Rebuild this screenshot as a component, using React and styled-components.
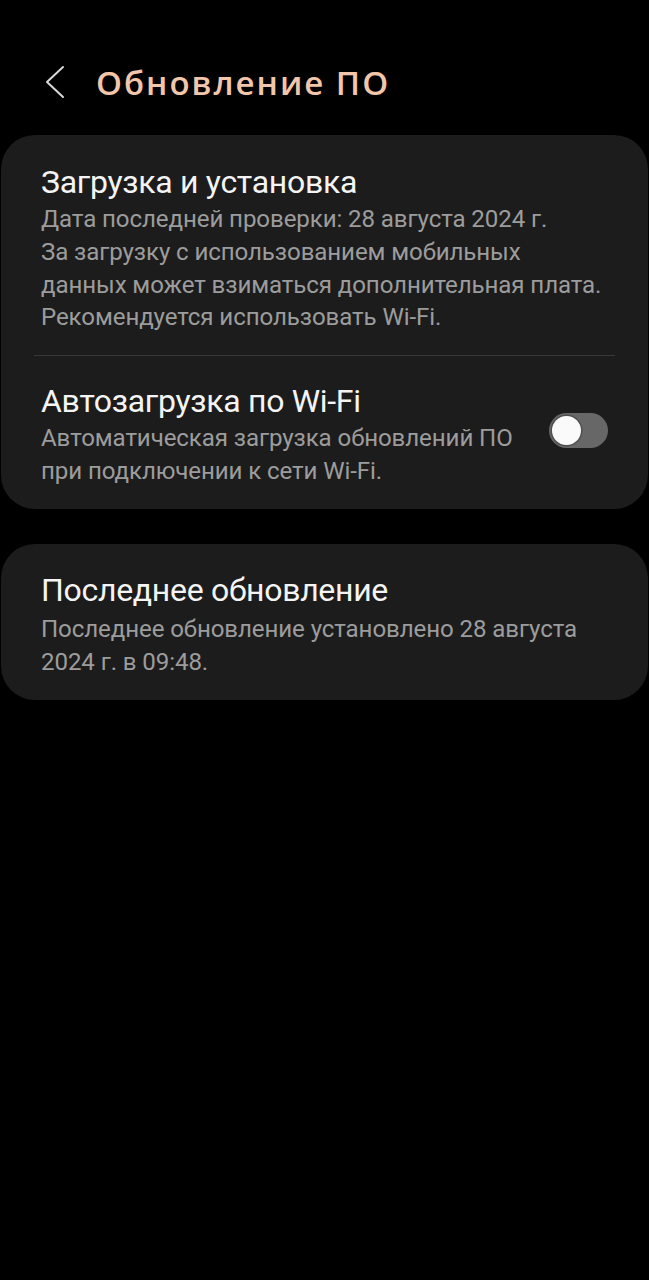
import React, { useState } from 'react';
import styled, { createGlobalStyle } from 'styled-components';

const GlobalStyle = createGlobalStyle`
  html, body {
    margin: 0;
    padding: 0;
    background: #000;
  }
  body {
    font-family: Roboto, "Noto Sans", "Liberation Sans", sans-serif;
    -webkit-font-smoothing: antialiased;
  }
`;

const Page = styled.main`
  min-height: 1280px;
  background: #000;
  padding: 47px 1px 0;
  box-sizing: border-box;
`;

const Header = styled.header`
  display: flex;
  align-items: center;
  height: 70px;
  margin-bottom: 18px;
  padding-left: 40px;
`;

const BackButton = styled.button`
  display: flex;
  align-items: center;
  justify-content: center;
  width: 28px;
  height: 40px;
  padding: 0;
  margin-right: 27px;
  background: none;
  border: 0;
  cursor: pointer;
`;

const Title = styled.h1`
  margin: 0;
  font-family: "Open Sans", Roboto, sans-serif;
  font-size: 33px;
  font-weight: 600;
  letter-spacing: 2px;
  color: #f2c6aa;
`;

const Card = styled.section`
  background: #1c1c1c;
  border-radius: 34px;
  margin-bottom: 35px;
  overflow: hidden;
`;

const Row = styled.div`
  display: flex;
  align-items: flex-start;
  gap: 16px;
  padding: ${(p) => p.$top || 27}px 46px ${(p) => p.$bottom || 21}px 40px;
`;

const RowText = styled.div`
  flex: 1;
  min-width: 0;
`;

const RowTitle = styled.div`
  font-size: 32px;
  line-height: 36px;
  color: #f4f4f4;
  letter-spacing: -0.3px;
`;

const RowSub = styled.div`
  margin-top: ${(p) => p.$gap || 3}px;
  font-size: 24.1px;
  line-height: 32.8px;
  color: #9c9c9c;
  letter-spacing: -0.1px;
`;

const Divider = styled.hr`
  margin: 0 33px;
  border: 0;
  height: 1px;
  background: #383838;
`;

const Track = styled.button`
  position: relative;
  flex: none;
  width: 59px;
  height: 35px;
  padding: 0;
  border: 0;
  border-radius: 18px;
  background: ${(p) => (p.$on ? '#3e91ff' : '#676767')};
  cursor: pointer;
  margin-top: 30px;
  margin-right: -6px;
`;

const Thumb = styled.span`
  position: absolute;
  top: 3px;
  left: ${(p) => (p.$on ? '27px' : '3px')};
  width: 29px;
  height: 29px;
  border-radius: 50%;
  background: #fafafa;
  box-shadow: 0 0 0 1.5px #505050;
  transition: left 0.15s;
`;

const Chevron = () => (
  <svg width="20" height="34" viewBox="0 0 20 34" fill="none">
    <polyline
      points="18,2 2,17 18,32"
      stroke="#d8d8d8"
      strokeWidth="2"
      strokeLinecap="round"
      strokeLinejoin="round"
    />
  </svg>
);

export default function App() {
  const [auto, setAuto] = useState(false);

  return (
    <Page>
      <GlobalStyle />
      <Header>
        <BackButton aria-label="Назад">
          <Chevron />
        </BackButton>
        <Title>Обновление ПО</Title>
      </Header>

      <Card>
        <Row $top={29}>
          <RowText>
            <RowTitle>Загрузка и установка</RowTitle>
            <RowSub>
              Дата последней проверки: 28 августа 2024 г.
              <br />
              За загрузку с использованием мобильных данных может взиматься
              дополнительная плата. Рекомендуется использовать Wi-Fi.
            </RowSub>
          </RowText>
        </Row>
        <Divider />
        <Row>
          <RowText>
            <RowTitle>Автозагрузка по Wi-Fi</RowTitle>
            <RowSub>
              Автоматическая загрузка обновлений ПО при подключении к сети
              Wi-Fi.
            </RowSub>
          </RowText>
          <Track $on={auto} onClick={() => setAuto(!auto)} aria-label="Автозагрузка">
            <Thumb $on={auto} />
          </Track>
        </Row>
      </Card>

      <Card>
        <Row $top={28} $bottom={22}>
          <RowText>
            <RowTitle>Последнее обновление</RowTitle>
            <RowSub $gap={5}>Последнее обновление установлено 28 августа 2024 г. в 09:48.</RowSub>
          </RowText>
        </Row>
      </Card>
    </Page>
  );
}
